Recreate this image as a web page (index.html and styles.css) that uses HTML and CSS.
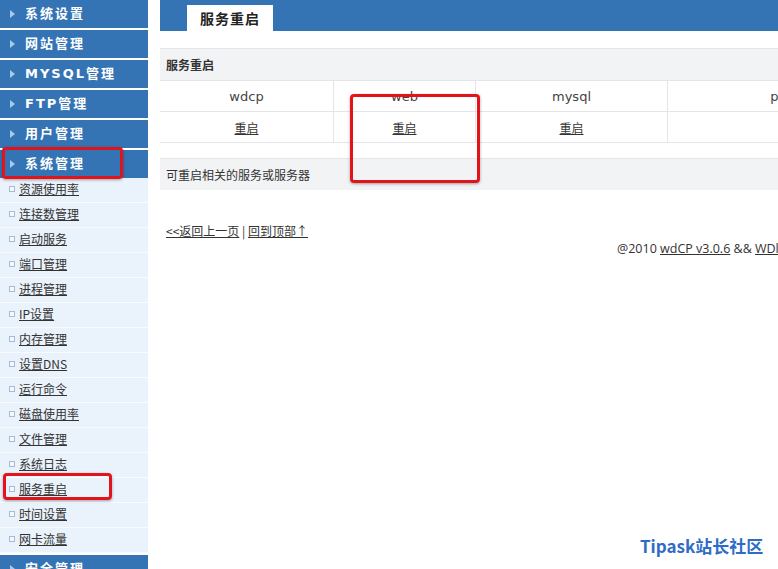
FILE: index.html
```html
<!DOCTYPE html>
<html lang="zh-CN">
<head>
  <meta charset="UTF-8" />
  <title>服务重启 - wdCP</title>
  <link rel="stylesheet" href="styles.css">
</head>
<body>
  <div class="sidebar">
    <div class="menu-head"><i class="arrow"></i>系统设置</div>
    <div class="menu-head"><i class="arrow"></i>网站管理</div>
    <div class="menu-head"><i class="arrow"></i>MYSQL管理</div>
    <div class="menu-head"><i class="arrow"></i>FTP管理</div>
    <div class="menu-head"><i class="arrow"></i>用户管理</div>
    <div class="menu-head"><i class="arrow"></i>系统管理</div>
    <ul class="menu-list">
      <li><i class="dot"></i><a href="#">资源使用率</a></li>
      <li><i class="dot"></i><a href="#">连接数管理</a></li>
      <li><i class="dot"></i><a href="#">启动服务</a></li>
      <li><i class="dot"></i><a href="#">端口管理</a></li>
      <li><i class="dot"></i><a href="#">进程管理</a></li>
      <li><i class="dot"></i><a href="#">IP设置</a></li>
      <li><i class="dot"></i><a href="#">内存管理</a></li>
      <li><i class="dot"></i><a href="#">设置DNS</a></li>
      <li><i class="dot"></i><a href="#">运行命令</a></li>
      <li><i class="dot"></i><a href="#">磁盘使用率</a></li>
      <li><i class="dot"></i><a href="#">文件管理</a></li>
      <li><i class="dot"></i><a href="#">系统日志</a></li>
      <li><i class="dot"></i><a href="#">服务重启</a></li>
      <li><i class="dot"></i><a href="#">时间设置</a></li>
      <li><i class="dot"></i><a href="#">网卡流量</a></li>
    </ul>
    <div class="menu-head"><i class="arrow"></i>安全管理</div>
  </div>

  <div class="main">
    <div class="topbar">
      <div class="tab">服务重启</div>
    </div>

    <div class="panel">
      <div class="panel-title">服务重启</div>
      <table class="svc-table">
        <tr>
          <td class="c1">wdcp</td>
          <td class="c2">web</td>
          <td class="c3">mysql</td>
          <td class="c4">pureftpd</td>
        </tr>
        <tr>
          <td><a href="#">重启</a></td>
          <td><a href="#">重启</a></td>
          <td><a href="#">重启</a></td>
          <td><a href="#">重启</a></td>
        </tr>
      </table>
      <div class="panel-note">可重启相关的服务或服务器</div>
    </div>

    <div class="back-links">
      <a href="#">&lt;&lt;返回上一页</a> | <a href="#">回到顶部↑</a>
    </div>
    <div class="footer">@2010 <a href="#">wdCP v3.0.6</a> &amp;&amp; <a href="#">WDlinux</a></div>
  </div>

  <!-- annotation marks over the screenshot -->
  <div class="mark mark-menu"></div>
  <div class="mark mark-web"></div>
  <div class="mark mark-item"></div>
  <div class="watermark">Tipask站长社区</div>
</body>
</html>
```

FILE: styles.css
```css
body {
  margin: 0; padding: 0;
  font-family: "DejaVu Sans", "Noto Sans CJK SC", sans-serif;
  font-size: 12px; color: #333; background: #fff;
  display: flex; overflow: hidden; height: 569px;
}
a { color: #333; }

.sidebar {
  width: 148px; flex: none;
}
.menu-head {
  height: 28px; line-height: 28px; margin-bottom: 2px;
  background: #3574b4; color: #fff;
  font-weight: 700; font-size: 13px; letter-spacing: 2px;
  padding-left: 25px;
  display: flex; align-items: center;
}
.menu-head .arrow {
  width: 0; height: 0; margin-left: -15px; margin-right: 10px;
  border-left: 5px solid #a8c8ec;
  border-top: 4px solid transparent; border-bottom: 4px solid transparent;
}
.menu-list {
  list-style: none; margin: -2px 0 2px; padding: 0;
}
.menu-list li {
  box-sizing: border-box; height: 25px; padding-bottom: 3px;
  background: #eaf2fb; border-bottom: 1px solid #f7fafe;
  display: flex; align-items: center; padding-left: 9px;
}
.menu-list .dot {
  width: 4px; height: 4px; border: 1px solid #a5bcd6;
  background: #f4f8fc; margin-right: 4px; margin-top: 1px;
}
.menu-list a {
  color: #333; font-size: 12px; line-height: 18px;
  font-family: "Noto Sans CJK SC", sans-serif;
}

.main {
  flex: none; width: 1000px; margin-left: 12px;
}
.topbar {
  height: 31px; background: #3474b4;
  display: flex; align-items: flex-end;
}
.tab {
  margin-left: 27px; width: 86px; height: 26px; line-height: 26px;
  background: #fff; text-align: center;
  font-family: "Noto Sans CJK SC", sans-serif;
  font-size: 14px; font-weight: 700; letter-spacing: 1px; color: #222;
}

.panel { margin-top: 17px; }
.panel-title, .panel-note {
  height: 31px; line-height: 31px; padding-left: 6px;
  background: #f2f3f5; border-top: 1px solid #e4e6ea;
  font-family: "Noto Sans CJK SC", sans-serif;
}
.panel-title { font-weight: 700; }
.panel-note { margin-top: 15px; }

.svc-table {
  border-collapse: collapse; table-layout: fixed; width: 765px;
}
.svc-table td {
  height: 30px; text-align: center; padding: 0;
  border: 1px solid #e3e5e8; border-left: none;
  font-size: 13px; color: #444;
}
.svc-table tr:first-child td { border-top: 1px solid #e3e5e8; }
.svc-table td a { font-size: 12px; color: #333; font-family: "Noto Sans CJK SC", sans-serif; }
.svc-table .c1 { width: 173px; }
.svc-table .c2 { width: 141px; }
.svc-table .c3 { width: 191px; }
.svc-table .c4 { width: 260px; }

.back-links {
  margin-top: 32px; padding-left: 6px;
  font-family: "Noto Sans CJK SC", sans-serif;
  line-height: 18px;
}
.footer {
  margin-left: 457px; white-space: nowrap; line-height: 18px;
  font-family: "Open Sans", "Liberation Sans", sans-serif; font-size: 12.5px;
}

.mark {
  position: absolute;
  border: 3px solid #e3131b; border-radius: 4px;
  box-shadow: 0 1px 3px rgba(0,0,0,0.35);
}
.mark-menu { left: 2px; top: 147px; width: 115px; height: 26px; }
.mark-web { left: 350px; top: 94px; width: 124px; height: 83px; }
.mark-item { left: 3px; top: 473px; width: 103px; height: 21px; }

.watermark {
  position: absolute; left: 640px; top: 533px;
  color: #2e6cc6; font-size: 17px; font-weight: 700;
  font-family: "Noto Sans CJK SC", sans-serif;
}
```
